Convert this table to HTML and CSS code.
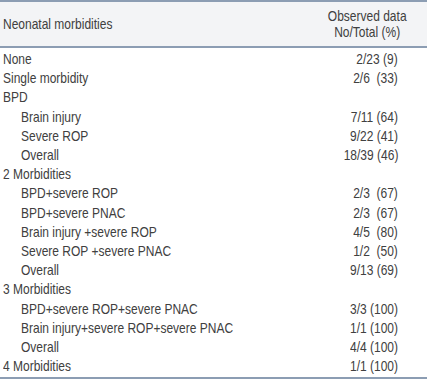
FILE: index.html
```html
<!DOCTYPE html>
<html>
<head>
<meta charset="utf-8">
<link rel="stylesheet" href="styles.css">
</head>
<body>
<table class="tbl">
  <thead>
    <tr class="head">
      <th class="c-name"><span class="t">Neonatal morbidities</span></th>
      <th class="c-val"><span class="t">Observed data<br>No/Total (%)</span></th>
    </tr>
  </thead>
  <tbody>
    <tr class="first"><td><span class="t">None</span></td><td class="v"><span class="t">2/23 (9)</span></td></tr>
    <tr><td><span class="t">Single morbidity</span></td><td class="v"><span class="t">2/6&nbsp; (33)</span></td></tr>
    <tr><td><span class="t">BPD</span></td><td class="v"></td></tr>
    <tr><td class="sub"><span class="t">Brain injury</span></td><td class="v"><span class="t">7/11 (64)</span></td></tr>
    <tr><td class="sub"><span class="t">Severe ROP</span></td><td class="v"><span class="t">9/22 (41)</span></td></tr>
    <tr><td class="sub"><span class="t">Overall</span></td><td class="v"><span class="t">18/39 (46)</span></td></tr>
    <tr><td><span class="t">2 Morbidities</span></td><td class="v"></td></tr>
    <tr><td class="sub"><span class="t">BPD+severe ROP</span></td><td class="v"><span class="t">2/3&nbsp; (67)</span></td></tr>
    <tr><td class="sub"><span class="t">BPD+severe PNAC</span></td><td class="v"><span class="t">2/3&nbsp; (67)</span></td></tr>
    <tr><td class="sub"><span class="t">Brain injury +severe ROP</span></td><td class="v"><span class="t">4/5&nbsp; (80)</span></td></tr>
    <tr><td class="sub"><span class="t">Severe ROP +severe PNAC</span></td><td class="v"><span class="t">1/2&nbsp; (50)</span></td></tr>
    <tr><td class="sub"><span class="t">Overall</span></td><td class="v"><span class="t">9/13 (69)</span></td></tr>
    <tr><td><span class="t">3 Morbidities</span></td><td class="v"></td></tr>
    <tr><td class="sub"><span class="t">BPD+severe ROP+severe PNAC</span></td><td class="v"><span class="t">3/3 (100)</span></td></tr>
    <tr><td class="sub"><span class="t">Brain injury+severe ROP+severe PNAC</span></td><td class="v"><span class="t">1/1 (100)</span></td></tr>
    <tr><td class="sub"><span class="t">Overall</span></td><td class="v"><span class="t">4/4 (100)</span></td></tr>
    <tr class="last"><td><span class="t">4 Morbidities</span></td><td class="v"><span class="t">1/1 (100)</span></td></tr>
  </tbody>
</table>
</body>
</html>
```
FILE: styles.css
```css
html, body {
  margin: 0;
  padding: 0;
  background: #ffffff;
}
.tbl {
  width: 427px;
  border-collapse: collapse;
  font-family: "Liberation Sans", Arial, sans-serif;
  font-size: 15px;
  color: #404040;
  border-top: 2px solid #8c9db3;
  border-bottom: 2px solid #8c9db3;
}
.t {
  display: inline-block;
  transform: scaleX(0.8);
  transform-origin: left center;
}
.head {
  background: #f3f4f6;
  border-bottom: 2px solid #8c9db3;
}
.head th {
  font-weight: normal;
  height: 44px;
  padding: 0;
  vertical-align: middle;
  line-height: 16px;
}
.c-name {
  text-align: left;
  padding-left: 3px !important;
}
.c-val {
  text-align: center;
  width: 120px;
}
.c-val .t {
  transform-origin: center center;
}
td {
  padding: 0 0 0 3px;
  line-height: 19.2px;
  height: 19.2px;
  white-space: nowrap;
}
td.sub {
  padding-left: 21px;
}
td.v {
  text-align: right;
  padding-right: 29px;
}
td.v .t {
  transform-origin: right center;
}
tr.first td {
  padding-top: 1px;
}
tr.last td {
  padding-bottom: 2px;
}
```
